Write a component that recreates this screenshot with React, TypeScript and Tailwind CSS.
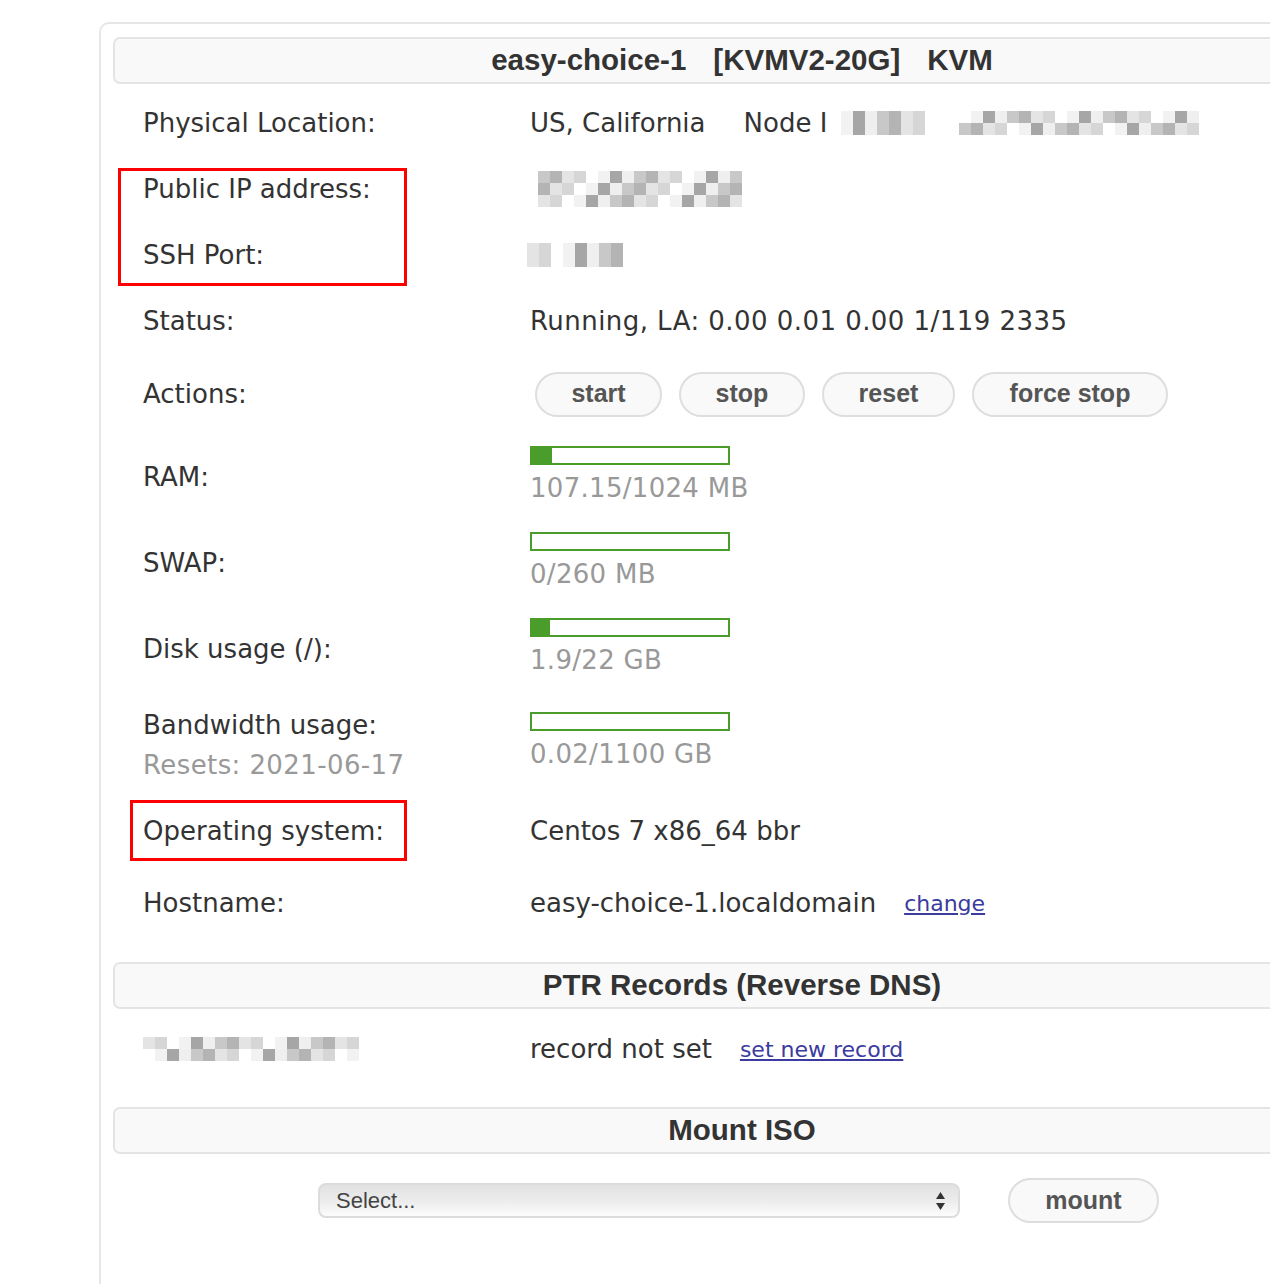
const SHADES = [
  'bg-white',
  'bg-[#f2f2f2]',
  'bg-[#e4e4e4]',
  'bg-[#d6d6d6]',
  'bg-[#c8c8c8]',
  'bg-[#b4b4b4]',
  'bg-[#a6a6a6]',
  'bg-[#efefef]',
];

function Pix({ cols, rows, seed }: { cols: number; rows: number; seed: number }) {
  const cells = [];
  let s = seed;
  for (let i = 0; i < cols * rows; i++) {
    s = (s * 9301 + 49297) % 233280;
    cells.push(SHADES[s % SHADES.length]);
  }
  return (
    <div className="grid" style={{ gridTemplateColumns: `repeat(${cols}, 12px)` }}>
      {cells.map((c, i) => (
        <div key={i} className={`h-[12px] w-[12px] ${c}`} />
      ))}
    </div>
  );
}

function Header({ children }: { children: React.ReactNode }) {
  return (
    <div className="h-[47px] w-[1258px] rounded-[7px] border-2 border-[#e4e4e4] bg-[#f9f9f9] flex items-center justify-center font-['Liberation_Sans',Arial,sans-serif] font-bold text-[29.5px] text-[#333]">
      {children}
    </div>
  );
}

function Row({
  h,
  label,
  children,
}: {
  h: string;
  label: React.ReactNode;
  children?: React.ReactNode;
}) {
  return (
    <div className={`flex items-center pl-[30px] ${h}`}>
      <div className="w-[387px] shrink-0">{label}</div>
      <div className="flex items-center">{children}</div>
    </div>
  );
}

function Btn({ children, w }: { children: React.ReactNode; w: string }) {
  return (
    <button
      className={`${w} h-[45px] rounded-full border-2 border-[#dedede] bg-[#f9f9f9] font-['Liberation_Sans',Arial,sans-serif] font-bold text-[25px] text-[#555]`}
    >
      {children}
    </button>
  );
}

function Usage({ fill, text }: { fill: string; text: string }) {
  return (
    <div className="flex flex-col">
      <div className="h-[19px] w-[200px] border-2 border-[#4a9d2b] bg-white">
        <div className={`h-full ${fill} bg-[#4a9d2b]`} />
      </div>
      <div className="mt-[4px] text-[#999] tracking-[0.3px]">{text}</div>
    </div>
  );
}

export default function App() {
  return (
    <div className="h-[1284px] w-[1270px] overflow-hidden bg-white font-['DejaVu_Sans',Verdana,sans-serif] text-[26px] text-[#333]">
      <div className="ml-[99px] mt-[22px] h-[1300px] w-[1300px] rounded-tl-[10px] border-l-2 border-t-2 border-[#e6e6e6] pl-[12px] pt-[13px]">
        <Header>
          <span>easy-choice-1</span>
          <span className="ml-[27px]">[KVMV2-20G]</span>
          <span className="ml-[27px]">KVM</span>
        </Header>

        <div className="mt-[6px]">
          <Row h="h-[66px]" label="Physical Location:">
            <span>US, California</span>
            <span className="ml-[38px]">Node I</span>
            <div className="ml-[2px] flex gap-[34px]">
              <Pix cols={8} rows={2} seed={3} />
              <Pix cols={20} rows={2} seed={11} />
            </div>
          </Row>

          <div className="relative">
            <div className="absolute left-[5px] top-[12px] h-[118px] w-[289px] border-[3px] border-[#f00]" />
            <Row h="h-[66px]" label="Public IP address:">
              <div className="ml-[8px]">
                <Pix cols={17} rows={3} seed={7} />
              </div>
            </Row>
            <Row h="h-[66px]" label="SSH Port:">
              <div className="-ml-[3px]">
                <Pix cols={8} rows={2} seed={21} />
              </div>
            </Row>
          </div>

          <Row h="h-[66px]" label="Status:">
            <span className="tracking-[0.45px]">Running, LA: 0.00 0.01 0.00 1/119 2335</span>
          </Row>

          <Row h="h-[80px]" label="Actions:">
            <div className="ml-[5px] flex gap-[17px]">
              <Btn w="w-[127px]">start</Btn>
              <Btn w="w-[126px]">stop</Btn>
              <Btn w="w-[133px]">reset</Btn>
              <Btn w="w-[196px]">force stop</Btn>
            </div>
          </Row>

          <Row h="h-[86px]" label="RAM:">
            <Usage fill="w-[20px]" text="107.15/1024 MB" />
          </Row>
          <Row h="h-[86px]" label="SWAP:">
            <Usage fill="w-0" text="0/260 MB" />
          </Row>
          <Row h="h-[86px]" label="Disk usage (/):">
            <Usage fill="w-[18px]" text="1.9/22 GB" />
          </Row>

          <Row
            h="h-[106px]"
            label={
              <div className="flex flex-col gap-[1px]">
                <span>Bandwidth usage:</span>
                <span className="text-[#999] tracking-[0.4px]">Resets: 2021-06-17</span>
              </div>
            }
          >
            <div className="-mt-[4px]">
              <Usage fill="w-0" text="0.02/1100 GB" />
            </div>
          </Row>

          <div className="relative">
            <div className="absolute left-[17px] top-[2px] h-[61px] w-[277px] border-[3px] border-[#f00]" />
            <Row h="h-[66px]" label="Operating system:">
              <span>Centos 7 x86_64 bbr</span>
            </Row>
          </div>

          <Row h="h-[78px]" label="Hostname:">
            <span>easy-choice-1.localdomain</span>
            <a href="#" className="ml-[28px] text-[22px] text-[#3b3ba0] underline">
              change
            </a>
          </Row>
        </div>

        <div className="mt-[20px]">
          <Header>PTR Records (Reverse DNS)</Header>
        </div>

        <Row h="h-[80px]" label={<Pix cols={18} rows={2} seed={5} />}>
          <span>record not set</span>
          <a href="#" className="ml-[28px] text-[22px] text-[#3b3ba0] underline">
            set new record
          </a>
        </Row>

        <div className="mt-[18px]">
          <Header>Mount ISO</Header>
        </div>

        <div className="mt-[24px] flex items-center">
          <div className="ml-[205px] flex h-[35px] w-[642px] items-center justify-between rounded-[8px] border-2 border-[#dcdcdc] bg-gradient-to-b from-[#e2e2e2] via-[#ececec] to-[#fcfcfc] px-[16px] font-['Liberation_Sans',Arial,sans-serif] text-[22px] text-[#444]">
            <span>Select...</span>
            <svg width="11" height="22" viewBox="0 0 11 22" className="-mr-[4px]">
              <path d="M5.5 2 L10 9 L1 9 Z" fill="#333" />
              <path d="M5.5 20 L10 13 L1 13 Z" fill="#333" />
            </svg>
          </div>
          <div className="ml-[48px]">
            <Btn w="w-[151px]">mount</Btn>
          </div>
        </div>
      </div>
    </div>
  );
}
